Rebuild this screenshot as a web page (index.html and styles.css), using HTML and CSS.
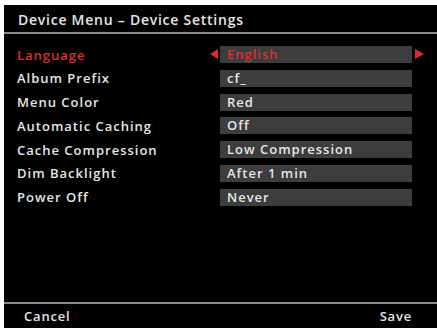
FILE: index.html
```html
<!DOCTYPE html>
<html>
<head>
<meta charset="utf-8">
<link rel="stylesheet" href="styles.css">
</head>
<body>
<div class="screen">
  <div class="header">Device Menu – Device Settings</div>
  <div class="menu">
    <div class="row active">
      <div class="label">Language</div>
      <div class="arrow left"></div>
      <div class="value">English</div>
      <div class="arrow right"></div>
    </div>
    <div class="row"><div class="label">Album Prefix</div><div class="spacer"></div><div class="value">cf_</div><div class="spacer"></div></div>
    <div class="row"><div class="label">Menu Color</div><div class="spacer"></div><div class="value">Red</div><div class="spacer"></div></div>
    <div class="row"><div class="label">Automatic Caching</div><div class="spacer"></div><div class="value">Off</div><div class="spacer"></div></div>
    <div class="row"><div class="label">Cache Compression</div><div class="spacer"></div><div class="value">Low Compression</div><div class="spacer"></div></div>
    <div class="row"><div class="label">Dim Backlight</div><div class="spacer"></div><div class="value">After 1 min</div><div class="spacer"></div></div>
    <div class="row"><div class="label">Power Off</div><div class="spacer"></div><div class="value">Never</div><div class="spacer"></div></div>
  </div>
  <div class="footer">
    <span>Cancel</span>
    <span>Save</span>
  </div>
</div>
</body>
</html>
```
FILE: styles.css
```css
html, body {
  margin: 0;
  padding: 0;
  background: #fff;
}
.screen {
  margin: 5px 0 0 4px;
  width: 433px;
  height: 323px;
  background: #000;
  display: flex;
  flex-direction: column;
  font-family: "Open Sans", "DejaVu Sans", sans-serif;
  font-weight: 600;
  color: #e6e6e6;
}
.header {
  height: 29px;
  box-sizing: border-box;
  padding: 6px 0 0 14px;
  font-size: 14px;
  line-height: 18px;
  letter-spacing: 0.75px;
  border-bottom: 2px solid #8a8a8a;
}
.menu {
  flex: 1;
  display: flex;
  flex-direction: column;
  gap: 6.8px;
  padding-top: 12px;
}
.row {
  display: flex;
  align-items: center;
  height: 17px;
}
.label {
  width: 202px;
  padding-left: 13px;
  box-sizing: border-box;
  font-size: 13px;
  letter-spacing: 1px;
}
.spacer, .arrow {
  width: 14px;
  height: 17px;
  position: relative;
}
.value {
  width: 192px;
  height: 17px;
  background: #3d3d3d;
  box-sizing: border-box;
  padding-left: 7px;
  font-size: 13px;
  line-height: 17px;
  letter-spacing: 1px;
}
.active .label, .active .value {
  color: #d83232;
}
.arrow::after {
  content: "";
  position: absolute;
  top: 3px;
  width: 0;
  height: 0;
  border-top: 5px solid transparent;
  border-bottom: 5px solid transparent;
}
.arrow.left::after {
  left: 4px;
  border-right: 8px solid #e02a2a;
}
.arrow.right::after {
  left: 3px;
  border-left: 9px solid #e02a2a;
}
.footer {
  height: 24px;
  border-top: 2px solid #8a8a8a;
  display: flex;
  justify-content: space-between;
  align-items: center;
  padding: 0 25px 0 20px;
  font-size: 13px;
  letter-spacing: 0.8px;
}
```
